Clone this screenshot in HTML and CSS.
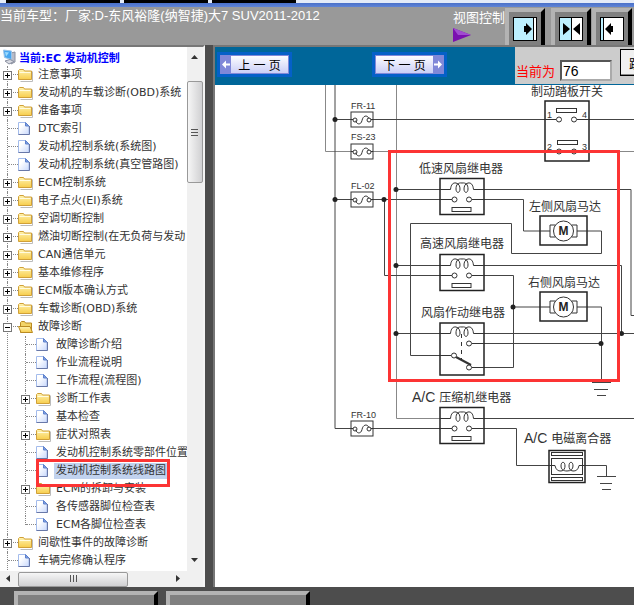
FILE: index.html
```html
<!DOCTYPE html>
<html lang="zh-CN">
<head>
    <meta charset="UTF-8">
    <meta name="viewport" content="width=device-width, initial-scale=1.0">
    <title>发动机控制系统线路图</title>
    <link rel="stylesheet" href="styles.css">
</head>
<body>
    <!-- shared icons -->
    <svg class="defs" aria-hidden="true">
        <defs>
            <linearGradient id="g-folder" x1="0" y1="0" x2="0" y2="1">
                <stop offset="0" stop-color="#fff3b0"/><stop offset="1" stop-color="#f7cd4c"/>
            </linearGradient>
            <linearGradient id="g-page" x1="0" y1="0" x2="1" y2="1">
                <stop offset="0.3" stop-color="#ffffff"/><stop offset="1" stop-color="#c8d8fc"/>
            </linearGradient>
            <symbol id="folder" viewBox="0 0 16 16">
                <path d="M2.5 14.500h12v-10" fill="none" stroke="#bbb"/>
                <path d="M.5 12.500v-9l1-1h4l1 1.500h7v8.500z" fill="url(#g-folder)" stroke="#d0a038"/>
                <path d="M1.500 5.500h11" stroke="#fffbe0"/>
            </symbol>
            <symbol id="folder-open" viewBox="0 0 16 16">
                <path d="M2.500 13.500v-10l1-1h3l1 1.500h6v9z" fill="#f3d468" stroke="#b98a22"/>
                <path d="M.5 7.500h11.500l2.500 6h-11.500z" fill="url(#g-folder)" stroke="#b98a22"/>
            </symbol>
            <symbol id="page" viewBox="0 0 16 16">
                <path d="M.5 13.500v-12h7l3.500 3.500v8.500z" fill="url(#g-page)" stroke="#a4bcec"/>
                <path d="M11.500 5v8.500h-11" fill="none" stroke="#6878a8"/>
                <path d="M7.500 1.500v3.500h3.500z" fill="#7fa0e4" stroke="#5f82cc"/>
            </symbol>
            <symbol id="computer" viewBox="0 0 16 16">
                <path d="M9 4l4-1v10l-4 2z" fill="#b8bcc8" stroke="#8a90a0"/>
                <path d="M1.500 1l8 1v8.500l-7-2z" fill="#46a6f0" stroke="#9cc4e8"/>
                <path d="M3 3l4 .5-3 4z" fill="#9edcff"/>
                <path d="M3 12l5-1.500 4 2-5 2.500z" fill="#d8dae2" stroke="#8a90a0"/>
            </symbol>
            <symbol id="fuse" viewBox="0 0 22 15" overflow="visible">
                <rect width="22" height="15" fill="#fff" stroke="#333"/>
                <path d="M0 7.500h2M20 7.500h2M5 8.500c0 4 5 5 6 0c1-5 5-6 7-2" fill="none" stroke="#333"/>
                <circle cx="4" cy="8" r="2" fill="none" stroke="#333"/>
                <circle cx="18" cy="8" r="2" fill="none" stroke="#333"/>
            </symbol>
            <symbol id="coil" viewBox="0 0 26 12" overflow="visible">
                <path d="M0 8h1.500C2 3 4 1 7 1.500C10 2 11 5 11 7.500C11 12 7 12 7 7.500C7 3 9 1 13 1.500" fill="none" stroke="#333"/>
                <path d="M26 8h-1.500C24 3 22 1 19 1.500C16 2 15 5 15 7.500C15 12 19 12 19 7.500C19 3 17 1 13 1.500" fill="none" stroke="#333"/>
            </symbol>
            <symbol id="relay" viewBox="0 0 44 36" overflow="visible">
                <rect width="44" height="36" fill="#fff" stroke="#222" stroke-width="1.500"/>
                <path d="M0 11h9M35 11h9M0 21h12M32 21h12" stroke="#333"/>
                <use href="#coil" x="9" y="3" width="26" height="12"/>
                <circle cx="14.500" cy="21" r="2.500" fill="#fff" stroke="#333"/>
                <circle cx="29" cy="21" r="2.500" fill="#fff" stroke="#333"/>
                <rect x="12" y="29" width="19" height="4" fill="#fff" stroke="#333"/>
            </symbol>
            <symbol id="motor" viewBox="0 0 47 29" overflow="visible">
                <rect width="47" height="29" fill="#fff" stroke="#222" stroke-width="1.500"/>
                <path d="M0 15h10M37 15h10" stroke="#333"/>
                <path d="M15 9h-5v12h5M32 9h5v12h-5" fill="none" stroke="#333"/>
                <circle cx="23.500" cy="15" r="10" fill="#fff" stroke="#333"/>
                <text class="motor-letter" x="23.500" y="19">M</text>
            </symbol>
        </defs>
    </svg>

    <div class="tabs"><span class="tab wide"></span><span class="tab"></span><span class="tab"></span></div>

    <header class="header">
        <h1 class="vehicle">当前车型：厂家:D-东风裕隆(纳智捷)大7 SUV2011-2012</h1>
        <div class="view-label">
            <span>视图控制</span>
            <svg width="20" height="16"><path d="M0 1l18 7-18 7z" fill="#7a10b0"/><path d="M0 1l18 7H5z" fill="#a04cd0"/></svg>
        </div>
        <div class="view-buttons">
            <button class="view-btn" aria-label="展开左侧">
                <svg width="24" height="24"><rect x=".5" y=".5" width="23" height="23" fill="#fff" stroke="#000"/><path d="M1 1h19v22H1z" fill="#bdf0ff"/><path d="M20.500 1v22" stroke="#000"/><path d="M11 9h2V6l6 6-6 6v-3h-2z"/></svg>
            </button>
            <button class="view-btn" aria-label="左右均分">
                <svg width="24" height="24"><rect x=".5" y=".5" width="23" height="23" fill="#fff" stroke="#000"/><path d="M1 1h11v22H1z" fill="#bdf0ff"/><path d="M12.500 1v22" stroke="#000"/><path d="M4 6l7 6-7 6zM21 6l-7 6 7 6z"/></svg>
            </button>
        </div>
        <button class="view-btn" aria-label="收起左侧">
            <svg width="24" height="24"><rect x=".5" y=".5" width="23" height="23" fill="#fff" stroke="#000"/><path d="M1 1h2v22H1z" fill="#bdf0ff"/><path d="M3.500 1v22" stroke="#000"/><path d="M13 9h-2V6l-6 6 6 6v-3h2z"/></svg>
        </button>
    </header>

    <main class="main">
        <nav class="sidebar">
            <div class="tree-pane">
                <a class="root" href="#"><svg class="icon"><use href="#computer"/></svg>当前:EC 发动机控制</a>
                <ul class="tree">
                    <li><div class="row"><button class="toggle" aria-label="展开"></button><svg class="icon"><use href="#folder"/></svg><a href="#">注意事项</a></div></li>
                    <li><div class="row"><button class="toggle" aria-label="展开"></button><svg class="icon"><use href="#folder"/></svg><a href="#">发动机的车载诊断(OBD)系统</a></div></li>
                    <li><div class="row"><button class="toggle" aria-label="展开"></button><svg class="icon"><use href="#folder"/></svg><a href="#">准备事项</a></div></li>
                    <li><div class="row leaf"><svg class="icon"><use href="#page"/></svg><a href="#">DTC索引</a></div></li>
                    <li><div class="row leaf"><svg class="icon"><use href="#page"/></svg><a href="#">发动机控制系统(系统图)</a></div></li>
                    <li><div class="row leaf"><svg class="icon"><use href="#page"/></svg><a href="#">发动机控制系统(真空管路图)</a></div></li>
                    <li><div class="row"><button class="toggle" aria-label="展开"></button><svg class="icon"><use href="#folder"/></svg><a href="#">ECM控制系统</a></div></li>
                    <li><div class="row"><button class="toggle" aria-label="展开"></button><svg class="icon"><use href="#folder"/></svg><a href="#">电子点火(EI)系统</a></div></li>
                    <li><div class="row"><button class="toggle" aria-label="展开"></button><svg class="icon"><use href="#folder"/></svg><a href="#">空调切断控制</a></div></li>
                    <li><div class="row"><button class="toggle" aria-label="展开"></button><svg class="icon"><use href="#folder"/></svg><a href="#">燃油切断控制(在无负荷与发动</a></div></li>
                    <li><div class="row"><button class="toggle" aria-label="展开"></button><svg class="icon"><use href="#folder"/></svg><a href="#">CAN通信单元</a></div></li>
                    <li><div class="row"><button class="toggle" aria-label="展开"></button><svg class="icon"><use href="#folder"/></svg><a href="#">基本维修程序</a></div></li>
                    <li><div class="row"><button class="toggle" aria-label="展开"></button><svg class="icon"><use href="#folder"/></svg><a href="#">ECM版本确认方式</a></div></li>
                    <li><div class="row"><button class="toggle" aria-label="展开"></button><svg class="icon"><use href="#folder"/></svg><a href="#">车载诊断(OBD)系统</a></div></li>
                    <li>
                        <div class="row"><button class="toggle open" aria-label="收起"></button><svg class="icon"><use href="#folder-open"/></svg><a href="#">故障诊断</a></div>
                        <ul class="subtree">
                            <li><div class="row leaf"><svg class="icon"><use href="#page"/></svg><a href="#">故障诊断介绍</a></div></li>
                            <li><div class="row leaf"><svg class="icon"><use href="#page"/></svg><a href="#">作业流程说明</a></div></li>
                            <li><div class="row leaf"><svg class="icon"><use href="#page"/></svg><a href="#">工作流程(流程图)</a></div></li>
                            <li><div class="row"><button class="toggle" aria-label="展开"></button><svg class="icon"><use href="#folder"/></svg><a href="#">诊断工作表</a></div></li>
                            <li><div class="row leaf"><svg class="icon"><use href="#page"/></svg><a href="#">基本检查</a></div></li>
                            <li><div class="row"><button class="toggle" aria-label="展开"></button><svg class="icon"><use href="#folder"/></svg><a href="#">症状对照表</a></div></li>
                            <li><div class="row leaf"><svg class="icon"><use href="#page"/></svg><a href="#">发动机控制系统零部件位置</a></div></li>
                            <li><div class="row leaf marked"><svg class="icon"><use href="#page"/></svg><a class="selected" href="#">发动机控制系统线路图</a></div></li>
                            <li><div class="row"><button class="toggle" aria-label="展开"></button><svg class="icon"><use href="#folder"/></svg><a href="#">ECM的拆卸与安装</a></div></li>
                            <li><div class="row leaf"><svg class="icon"><use href="#page"/></svg><a href="#">各传感器脚位检查表</a></div></li>
                            <li><div class="row leaf"><svg class="icon"><use href="#page"/></svg><a href="#">ECM各脚位检查表</a></div></li>
                        </ul>
                    </li>
                    <li><div class="row"><button class="toggle" aria-label="展开"></button><svg class="icon"><use href="#folder"/></svg><a href="#">间歇性事件的故障诊断</a></div></li>
                    <li><div class="row leaf"><svg class="icon"><use href="#page"/></svg><a href="#">车辆完修确认程序</a></div></li>
                </ul>
            </div>
            <div class="vscroll">
                <svg width="8" height="5"><path d="M0 4l3.500-4L7 4z"/></svg>
                <div class="vthumb"><svg width="8" height="9"><path d="M0 1.500h7M0 4.500h7M0 7.500h7" stroke="#555"/></svg></div>
                <svg width="8" height="5"><path d="M0 0h7L3.500 4z"/></svg>
            </div>
            <div class="hscroll">
                <svg width="5" height="8"><path d="M4 0v7L0 3.500z"/></svg>
                <div class="hthumb"><svg width="9" height="8"><path d="M1.500 0v7M4.500 0v7M7.500 0v7" stroke="#555"/></svg></div>
                <svg width="5" height="8"><path d="M0 0v7l4-3.500z"/></svg>
            </div>
        </nav>

        <section class="content">
            <div class="toolbar">
                <div class="pager">
                    <button class="page-btn"><svg class="arrow" width="10" height="17"><path d="M1 8.500l4-4v3h4v2H5v3z" fill="#fff"/></svg><span>上 一 页</span></button>
                    <button class="page-btn"><span>下 一 页</span><svg class="arrow" width="10" height="17"><path d="M9 8.500l-4-4v3H1v2h4v3z" fill="#fff"/></svg></button>
                </div>
                <form class="jump">
                    <label for="page-no">当前为</label>
                    <input id="page-no" type="text" value="76">
                    <button class="jump-btn" type="button">跳转</button>
                </form>
            </div>

            <svg class="diagram" width="419" height="501" viewBox="215 85 419 501">
                <!-- supply lines -->
                <g class="wire">
                    <path class="faint" d="M325.500 85V151.500H351M396.500 85V418.500H440"/>
                    <path d="M335 85V428.500H351M335 119.500H351M373 119.500H545M589 119.500H634M335 199.500H351"/>
                    <path class="faint" d="M373 151.500H634"/>
                    <path d="M373 199.500H440M384.500 199.500V275.500H440M396 189.500H440M396 265.500H440M396 333.500H440"/>
                    <path d="M484 189.500H631V315.500H634M484 199.500H523.500V231H540M587 231H601.500V253.500H511.500V223.500H410.500V355.500H440"/>
                    <path d="M484 265.500H621.500V333.500M484 275.500H513.500V367.500H484M513 307H540M587 307H601.500V382"/>
                    <path d="M484 333.500H634M484 343.500H601M484 418.500H634"/>
                    <path d="M373 428.500H440M484 428.500H516.500V465.500H549M585 465.500H606.500V476"/>
                    <path d="M592 382.500H611M594 389.500H608M597 395.500H606M597 476.500H616M600 483.500H612M602 489.500H611"/>
                </g>
                <g fill="#222">
                    <circle cx="335" cy="119.500" r="2.500"/><circle cx="335" cy="199.500" r="2.500"/>
                    <circle cx="384" cy="199.500" r="2.500"/><circle cx="396" cy="189.500" r="2.500"/>
                    <circle cx="396" cy="265.500" r="2.500"/><circle cx="396" cy="333.500" r="2.500"/>
                    <circle cx="513" cy="307" r="2.500"/><circle cx="601" cy="343.500" r="2.500"/>
                    <circle cx="621.500" cy="333.500" r="2.500"/>
                </g>

                <!-- fuses -->
                <use href="#fuse" x="351" y="112" width="22" height="15"/>
                <use href="#fuse" x="351" y="144" width="22" height="15"/>
                <use href="#fuse" x="351" y="192" width="22" height="15"/>
                <use href="#fuse" x="351" y="421" width="22" height="15"/>
                <g class="code">
                    <text x="351" y="109">FR-11</text>
                    <text x="351" y="140">FS-23</text>
                    <text x="351" y="189">FL-02</text>
                    <text x="351" y="418">FR-10</text>
                </g>

                <!-- brake pedal switch -->
                <rect x="545" y="101" width="44" height="60" fill="#fff" stroke="#222" stroke-width="1.500"/>
                <g fill="#fff" stroke="#333">
                    <path d="M545 119.500h11M577 119.500h12M545 151.500h11M577 151.500h12"/>
                    <rect x="556.500" y="108.500" width="20" height="4"/><rect x="557.500" y="140.500" width="20" height="4"/>
                    <circle cx="559" cy="119.500" r="2.500"/><circle cx="574" cy="119.500" r="2.500"/>
                    <circle cx="559" cy="151.500" r="2.500"/><circle cx="574" cy="151.500" r="2.500"/>
                </g>
                <g class="code">
                    <text x="547" y="118">1</text><text x="582" y="118">4</text>
                    <text x="547" y="150">2</text><text x="582" y="150">3</text>
                </g>

                <!-- relays and fan motors -->
                <use href="#relay" x="440" y="178.500" width="44" height="36"/>
                <use href="#relay" x="440" y="254.500" width="44" height="36"/>
                <use href="#relay" x="440" y="407.500" width="44" height="36"/>
                <use href="#motor" x="540" y="216" width="47" height="29"/>
                <use href="#motor" x="540" y="292" width="47" height="29"/>
                <rect x="440" y="323" width="44" height="52" fill="#fff" stroke="#222" stroke-width="1.500"/>
                <use href="#coil" x="449" y="325.500" width="26" height="12"/>
                <g fill="#fff" stroke="#333">
                    <path d="M440 333.500h9M475 333.500h9M472 343.500h12M440 355.500h11M472 367.500h12"/>
                    <path d="M461.500 334v26" stroke-dasharray="4 4"/>
                    <path d="M456 357l15 8" stroke-width="2"/>
                    <circle cx="469" cy="343.500" r="2.500"/><circle cx="454" cy="355.500" r="2.500"/><circle cx="469" cy="367.500" r="2.500"/>
                </g>

                <!-- A/C clutch -->
                <rect x="549" y="450.500" width="36" height="32" fill="#fff" stroke="#222" stroke-width="1.500"/>
                <g fill="none" stroke="#333">
                    <rect x="551.500" y="452.500" width="31" height="3"/><rect x="551.500" y="458.500" width="31" height="16"/><rect x="551.500" y="477.500" width="31" height="3"/>
                    <path d="M549 465.500h6C556 470 558 471 561 471C564 471 565 468 565 466C565 461 561 461 561 466C561 469 563 471 567 471"/>
                    <path d="M585 465.500h-6C578 470 576 471 573 471C570 471 569 468 569 466C569 461 573 461 573 466C573 469 571 471 567 471"/>
                </g>

                <g class="part">
                    <text x="531" y="96">制动踏板开关</text>
                    <text x="419" y="173">低速风扇继电器</text>
                    <text x="529" y="211">左侧风扇马达</text>
                    <text x="420" y="248">高速风扇继电器</text>
                    <text x="528" y="287">右侧风扇马达</text>
                    <text x="421" y="317">风扇作动继电器</text>
                    <text x="412" y="402"><tspan class="latin">A/C </tspan>压缩机继电器</text>
                    <text x="524" y="443"><tspan class="latin">A/C </tspan>电磁离合器</text>
                </g>
                <rect x="389.500" y="151.500" width="229" height="229" fill="none" stroke="#fc3434" stroke-width="3"/>
            </svg>
        </section>
    </main>

    <footer class="footer">
        <button class="foot-btn" aria-label="功能一"></button>
        <button class="foot-btn" aria-label="功能二"></button>
    </footer>
</body>
</html>
```

FILE: styles.css
```css
:root {
    --frame: #4d4d4d;
    --bar: #999;
    --blue: #069;
    --mark: #fc3434;
    --cjk: "Noto Sans CJK SC", sans-serif;
}
*, *::before, *::after {
    box-sizing: border-box;
}
body {
    margin: 0;
    height: 100vh;
    overflow: hidden;
    display: flex;
    flex-direction: column;
    background: var(--frame);
    font-family: "Liberation Sans", var(--cjk);
    font-size: 13px;
}
button {
    padding: 0;
    font-family: inherit;
}
.defs {
    position: absolute;
    width: 0;
    height: 0;
}

/* top strip and header */
.tabs {
    display: flex;
    gap: 4px;
    flex: none;
    height: 7px;
    padding-left: 6px;
    background: linear-gradient(#e4ebf8 0 3px, #4a70c8 3px, #5f84d6);
}
.tab {
    width: 84px;
    height: 3px;
    background: #000;
}
.tab.wide {
    width: 114px;
}
.header {
    display: flex;
    flex: none;
    height: 38px;
    padding-right: 2px;
    background: var(--bar);
    color: #fff;
    white-space: nowrap;
}
.vehicle {
    flex: 1;
    min-width: 0;
    margin: 0;
    font-size: 13px;
    font-weight: normal;
    line-height: 17px;
}
.view-label {
    display: flex;
    flex-direction: column;
    width: 52px;
    padding-top: 2px;
    line-height: 18px;
}
.view-buttons {
    display: flex;
    gap: 6px;
    margin-right: 1px;
}
.view-btn {
    display: flex;
    align-items: center;
    justify-content: center;
    width: 40px;
    height: 37px;
    margin-top: 1px;
    border: solid;
    border-width: 4px 4px 0 4px;
    border-color: #b3b3b3 #000 #000 #b3b3b3;
    background: #808080;
}

/* layout */
.main {
    display: flex;
    flex: 1;
    min-height: 0;
    gap: 8px;
}
.sidebar {
    display: grid;
    grid-template-columns: 1fr 16px;
    grid-template-rows: 1fr 16px;
    flex: none;
    width: 205px;
    border-top: 2px solid #777;
    border-right: 2px solid #f4f4f4;
    background: #fff;
}
.content {
    flex: 1;
    min-width: 0;
    overflow: hidden;
    border-top: 2px solid #777;
    border-left: 2px solid #777;
    background: #fff;
}

/* tree */
.tree-pane {
    min-height: 0;
    overflow: hidden;
    padding-top: 1px;
    color: #333;
    font-family: "DejaVu Sans", var(--cjk);
    font-size: 11px;
    white-space: nowrap;
}
.root {
    display: flex;
    align-items: center;
    gap: 1px;
    height: 18px;
    padding-left: 2px;
    color: #00f;
    font-weight: bold;
    text-decoration: none;
}
.icon {
    flex: none;
    width: 16px;
    height: 16px;
}
.tree, .subtree {
    margin: 0;
    padding: 0;
    list-style: none;
}
.subtree {
    padding-left: 18px;
}
.tree li {
    position: relative;
}
.tree li::before {
    content: '';
    position: absolute;
    top: 0;
    bottom: 0;
    left: 7px;
    border-left: 1px dotted #888;
}
.subtree li:last-child::before {
    bottom: 9px;
}
.row {
    display: flex;
    align-items: center;
    position: relative;
    height: 18px;
    padding-left: 3px;
}
.row::before {
    content: '';
    position: absolute;
    top: 8px;
    left: 8px;
    width: 10px;
    border-top: 1px dotted #888;
}
.row.leaf {
    padding-left: 18px;
}
.row a {
    padding: 0 2px;
    margin-left: 2px;
    color: inherit;
    line-height: 16px;
    text-decoration: none;
}
.row a.selected {
    background: #c1d2ee;
}
.toggle {
    position: relative;
    flex: none;
    width: 9px;
    height: 9px;
    margin-right: 6px;
    border: 1px solid #777;
    background: linear-gradient(#000, #000) 1px 3px / 5px 1px no-repeat,
        linear-gradient(#000, #000) 3px 1px / 1px 5px no-repeat, #fff;
}
.toggle.open {
    background: linear-gradient(#000, #000) 1px 3px / 5px 1px no-repeat, #fff;
}
.subtree li:has(.marked) {
    z-index: 1;
}
.marked::after {
    content: '';
    position: absolute;
    top: -3px;
    left: 18px;
    width: 134px;
    height: 28px;
    border: 3px solid var(--mark);
}

/* scroll bars */
.vscroll, .hscroll {
    display: flex;
    align-items: center;
    background: #f0f0f0;
    fill: #333;
}
.vscroll {
    flex-direction: column;
    padding: 8px 0;
}
.hscroll {
    grid-column: 1 / 3;
    padding: 0 22px 0 6px;
}
.vthumb, .hthumb {
    display: flex;
    align-items: center;
    justify-content: center;
    border: 1px solid #999;
    border-radius: 2px;
}
.vthumb {
    width: 16px;
    height: 102px;
    margin: 21px 0 auto;
    background: linear-gradient(90deg, #f6f6f6, #d0d0d2);
}
.hthumb {
    width: 110px;
    height: 15px;
    margin: 0 auto 0 7px;
    background: linear-gradient(#f6f6f6, #d0d0d2);
}

/* toolbar */
.toolbar {
    display: flex;
    height: 38px;
    background: var(--blue);
}
.pager {
    display: flex;
    flex: 1;
    align-items: flex-start;
    gap: 80px;
    padding: 5px 2px;
}
.page-btn {
    display: flex;
    align-items: center;
    width: 75px;
    height: 25px;
    padding: 1px;
    border: 3px solid #0560c8;
    background: linear-gradient(#fff, #c8ccf6);
    box-shadow: inset 0 0 0 1px #8088d8;
    color: #000;
    font-size: 12px;
}
.page-btn span {
    flex: 1;
    text-align: center;
}
.arrow {
    background: #8088d8;
}
.jump {
    display: flex;
    align-items: flex-start;
    flex: none;
    width: 119px;
    height: 37px;
    padding: 2px 0 0 1px;
    overflow: hidden;
    background: #ccc;
}
.jump label {
    flex: none;
    width: 44px;
    padding-top: 13px;
    color: #f00;
    line-height: 20px;
}
.jump input {
    flex: none;
    width: 52px;
    height: 21px;
    margin: 11px 8px 0 0;
    padding: 0 1px;
    border: 2px inset #aaa;
    background: #fff;
    font-family: inherit;
    font-size: 14px;
}
.jump-btn {
    flex: none;
    width: 44px;
    height: 27px;
    border: 1px solid #000;
    background: #f0f0f0;
    box-shadow: inset -1px -1px #888;
    font-size: 13px;
}

/* circuit diagram */
.diagram {
    display: block;
}
.wire {
    fill: none;
    stroke: #444;
}
.faint {
    stroke: #888;
}
.code {
    fill: #333;
    font-family: "Liberation Sans", sans-serif;
    font-size: 9px;
}
.part {
    fill: #333;
    font-family: "Liberation Sans", var(--cjk);
    font-size: 12px;
}
.latin {
    font-size: 14px;
}
.motor-letter {
    fill: #222;
    font-family: "Liberation Sans", sans-serif;
    font-size: 12px;
    font-weight: bold;
    text-anchor: middle;
}

/* bottom bar */
.footer {
    display: flex;
    gap: 8px;
    flex: none;
    height: 18px;
    padding: 4px 14px 0;
}
.foot-btn {
    width: 144px;
    height: 14px;
    border: solid;
    border-width: 4px 4px 0 4px;
    border-color: #b3b3b3 #000 #000 #b3b3b3;
    background: #808080;
}
```
